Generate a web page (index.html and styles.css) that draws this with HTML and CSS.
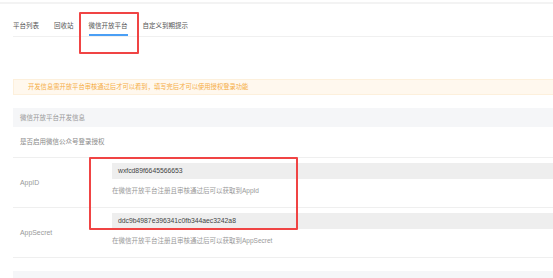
FILE: index.html
```html
<!DOCTYPE html>
<html lang="zh-CN">
<head>
    <meta charset="UTF-8">
    <title>微信开放平台</title>
    <link rel="stylesheet" href="styles.css">
</head>
<body>
    <div class="topline"></div>

    <!-- Tabs -->
    <div class="tabs">
        <div class="tab">平台列表</div>
        <div class="tab">回收站</div>
        <div class="tab active">微信开放平台</div>
        <div class="tab">自定义到期提示</div>
    </div>
    <div class="mark mark-tab"></div>

    <div class="alert">开发信息需开放平台审核通过后才可以看到，填写完后才可以使用授权登录功能</div>

    <div class="section-head">微信开放平台开发信息</div>
    <div class="row-plain">是否启用微信公众号登录授权</div>

    <div class="form-row">
        <div class="label">AppID</div>
        <div class="field">
            <div class="input">wxfcd89f6645566653</div>
            <div class="hint">在微信开放平台注册且审核通过后可以获取到AppId</div>
        </div>
    </div>
    <div class="form-row">
        <div class="label">AppSecret</div>
        <div class="field">
            <div class="input">ddc9b4987e396341c0fb344aec3242a8</div>
            <div class="hint">在微信开放平台注册且审核通过后可以获取到AppSecret</div>
        </div>
    </div>
    <div class="mark mark-fields"></div>

    <div class="footer-bar"></div>
</body>
</html>
```
FILE: styles.css
```css
/* Base */
* {
    margin: 0;
    padding: 0;
    box-sizing: border-box;
}

body {
    width: 553px;
    height: 278px;
    overflow: hidden;
    position: relative;
    background: #fff;
    font-family: "Liberation Sans", "Noto Sans CJK SC", sans-serif;
    font-size: 6.5px;
    color: #999;
}

.topline {
    height: 2px;
    margin-top: 2px;
    background: #f3f3f3;
}

/* Tabs */
.tabs {
    display: flex;
    margin-left: 13px;
    padding-top: 17px;
    border-bottom: 1px solid #f0f0f0;
}

.tab {
    line-height: 10px;
    padding-bottom: 3px;
    margin-right: 15px;
    color: #555;
    border-bottom: 2px solid transparent;
}

.tab.active {
    border-bottom-color: #4a9ff5;
}

/* Red annotation boxes */
.mark {
    position: absolute;
    border: 2px solid #f04444;
    border-radius: 1px;
}

.mark-tab {
    left: 79px;
    top: 12px;
    width: 60px;
    height: 42px;
}

.mark-fields {
    left: 89px;
    top: 157px;
    width: 209px;
    height: 73px;
}

/* Notice */
.alert {
    margin: 42px 0 0 13px;
    height: 16px;
    line-height: 14px;
    padding-left: 14px;
    background: #fff8ee;
    border: 1px solid #fdf0dc;
    border-right: none;
    font-size: 6.3px;
    color: #f5ad45;
}

.section-head {
    margin: 13px 0 0 13px;
    height: 19px;
    line-height: 19px;
    padding-left: 7px;
    background: #f5f6f8;
    color: #999;
}

.row-plain {
    margin-left: 13px;
    height: 31px;
    line-height: 30px;
    padding-left: 7px;
    border-bottom: 1px solid #efefef;
    color: #888;
}

/* Form rows */
.form-row {
    display: flex;
    align-items: center;
    margin-left: 13px;
    border-bottom: 1px solid #efefef;
}

.form-row .label {
    width: 99px;
    padding-left: 7px;
    font-size: 6.9px;
    color: #999;
}

.form-row .field {
    flex: 1;
    padding: 5px 0 11px;
}

.input {
    height: 16px;
    line-height: 16px;
    padding-left: 6px;
    background: #eeeeee;
    font-size: 6.8px;
    color: #444;
}

.hint {
    margin-top: 7px;
    line-height: 10px;
    color: #999;
}

.footer-bar {
    margin: 13px 0 0 13px;
    height: 20px;
    background: #f5f6f8;
}
```
